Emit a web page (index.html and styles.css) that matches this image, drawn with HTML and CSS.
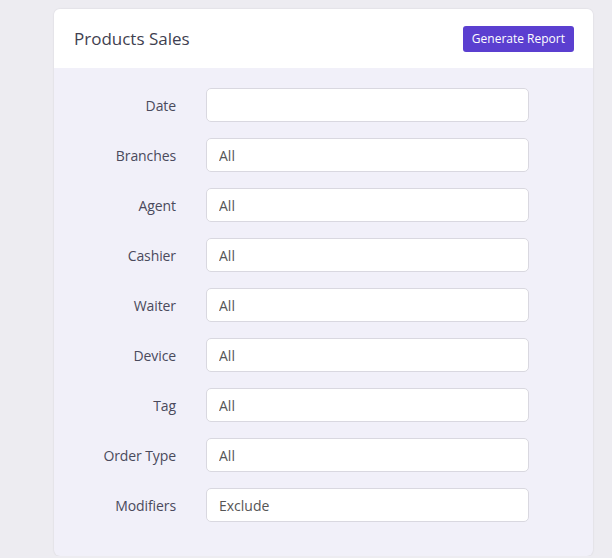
FILE: index.html
```
<!DOCTYPE html>
<html lang="en">
<head>
  <meta charset="UTF-8">
  <title>Products Sales</title>
  <link rel="stylesheet" href="styles.css">
</head>
<body>
  <div class="card">
    <div class="card-head">
      <h2>Products Sales</h2>
      <button class="btn">Generate Report</button>
    </div>
    <form class="card-body">
      <div class="row"><label>Date</label><input type="text" value=""></div>
      <div class="row"><label>Branches</label><input type="text" value="All"></div>
      <div class="row"><label>Agent</label><input type="text" value="All"></div>
      <div class="row"><label>Cashier</label><input type="text" value="All"></div>
      <div class="row"><label>Waiter</label><input type="text" value="All"></div>
      <div class="row"><label>Device</label><input type="text" value="All"></div>
      <div class="row"><label>Tag</label><input type="text" value="All"></div>
      <div class="row"><label>Order Type</label><input type="text" value="All"></div>
      <div class="row"><label>Modifiers</label><input type="text" value="Exclude"></div>
    </form>
  </div>
</body>
</html>
```

FILE: styles.css
```
*{box-sizing:border-box}
body{margin:0;padding:9px 19px 0 54px;background:#edecf1;font-family:"Open Sans",Arial,sans-serif;color:#4a4a5c}
.card{background:#f1f0f9;border-radius:6px;overflow:hidden;box-shadow:0 0 2px rgba(0,0,0,.12);height:547px}
.card-head{background:#fff;height:59px;display:flex;align-items:center;justify-content:space-between;padding:0 19px 0 20px}
.card-head h2{margin:0;font-size:17px;font-weight:400;color:#3f3f50}
.btn{background:#5b3fd0;color:#fff;border:none;border-radius:3px;height:26px;padding:0 9px;font:12px "Open Sans",Arial,sans-serif;cursor:pointer}
.card-body{padding:20px 0 0;display:flex;flex-direction:column;gap:16px}
.row{display:flex;align-items:center;gap:30px}
.row label{width:122px;text-align:right;font-size:14px;letter-spacing:-.1px;color:#4a4a5c}
.row input{width:323px;height:34px;border:1px solid #d9d8e0;border-radius:5px;background:#fff;padding:0 12px;font:14px "Open Sans",Arial,sans-serif;color:#555}
```
